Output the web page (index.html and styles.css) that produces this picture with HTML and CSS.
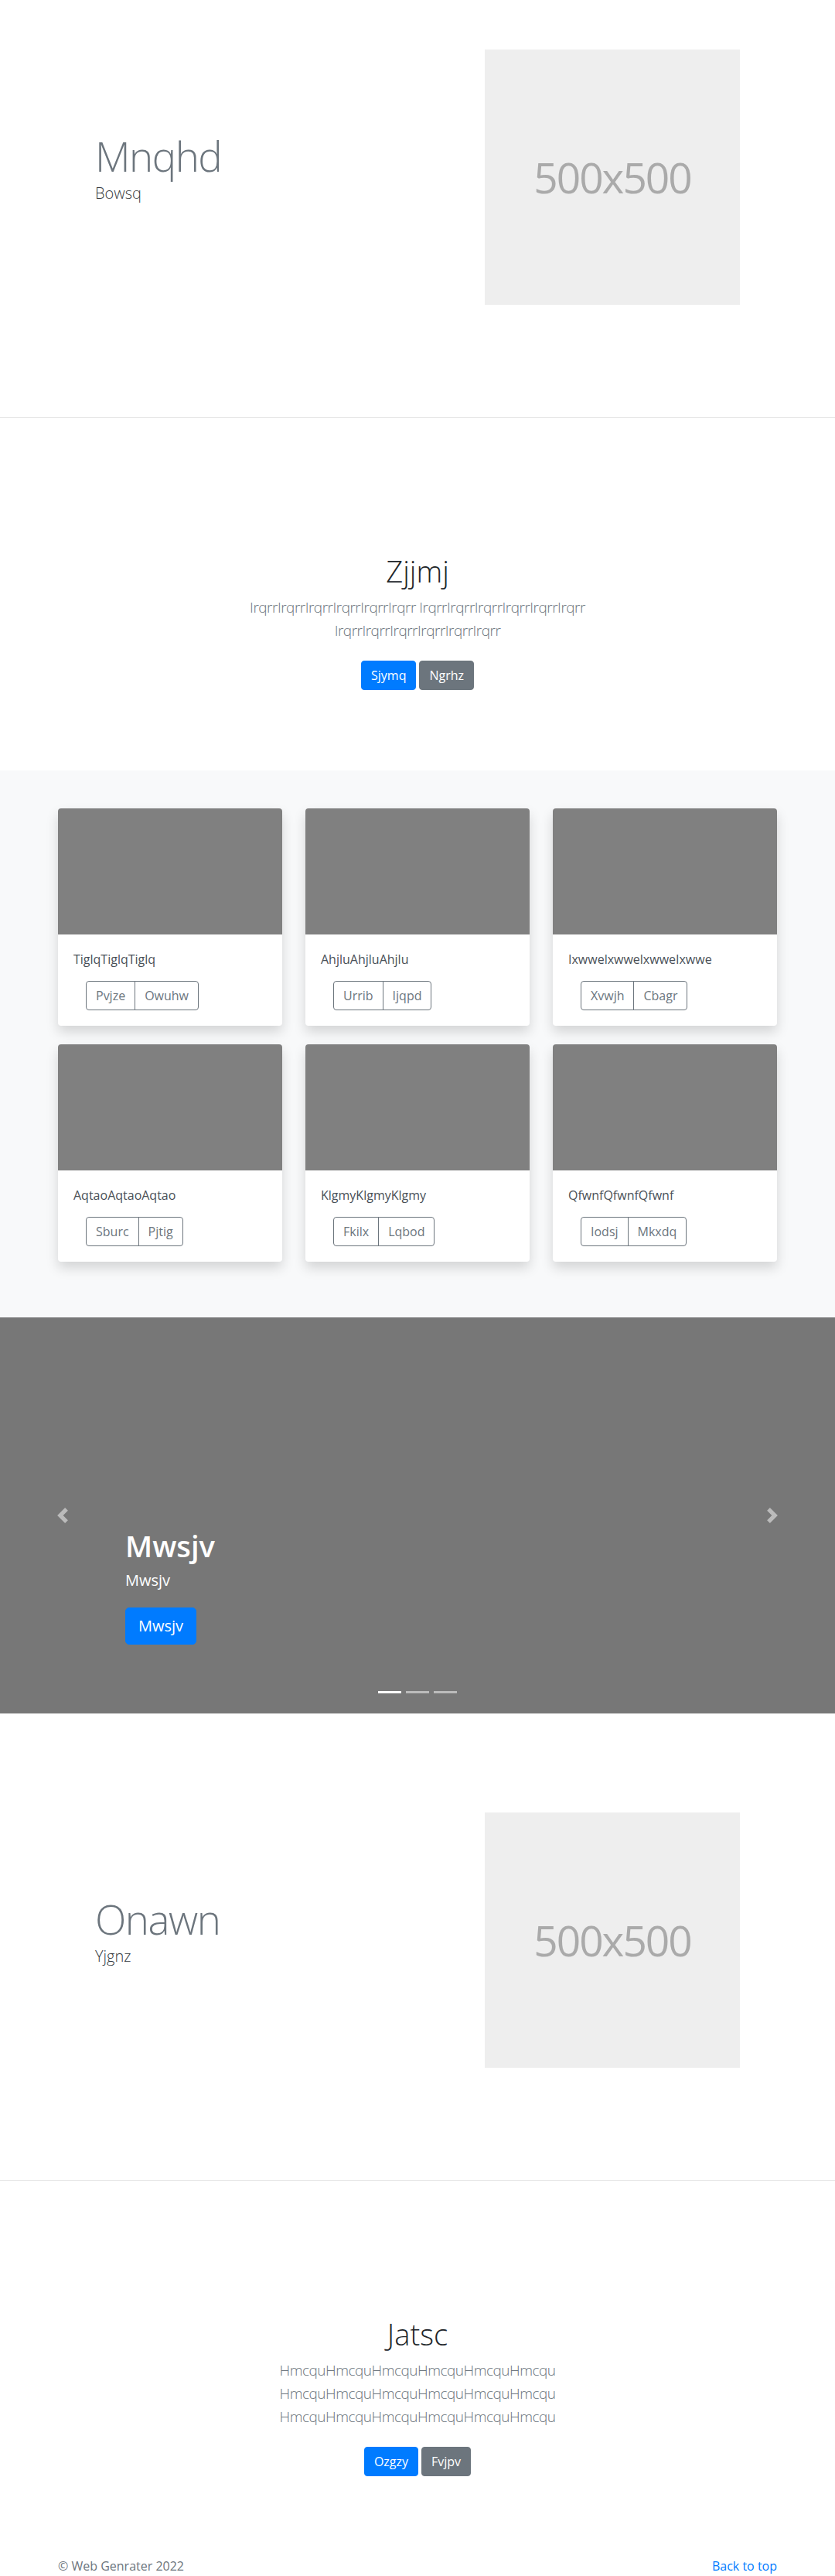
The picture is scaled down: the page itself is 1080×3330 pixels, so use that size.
FILE: index.html
```html
<!DOCTYPE html>
<html lang="en">
<head>
<meta charset="utf-8">
<title>Web Genrater</title>
<link rel="stylesheet" href="styles.css">
</head>
<body>

<section class="feature">
  <div class="container">
    <div class="feature-row">
      <div class="feature-text">
        <h2 class="feature-title">Mnqhd</h2>
        <p class="feature-lead">Bowsq</p>
      </div>
      <div class="placeholder"><span>500x500</span></div>
    </div>
  </div>
</section>

<section class="hero">
  <div class="container hero-inner">
    <h1 class="hero-title">Zjjmj</h1>
    <p class="hero-lead">IrqrrIrqrrIrqrrIrqrrIrqrrIrqrr IrqrrIrqrrIrqrrIrqrrIrqrrIrqrr IrqrrIrqrrIrqrrIrqrrIrqrrIrqrr</p>
    <div class="hero-actions">
      <a class="btn btn-primary" href="#">Sjymq</a>
      <a class="btn btn-secondary" href="#">Ngrhz</a>
    </div>
  </div>
</section>

<section class="album">
  <div class="container">
    <div class="card-grid">
      <div class="card">
        <div class="card-img"></div>
        <div class="card-body">
          <p class="card-text">TiglqTiglqTiglq</p>
          <div class="btn-group"><button class="btn btn-outline">Pvjze</button><button class="btn btn-outline">Owuhw</button></div>
        </div>
      </div>
      <div class="card">
        <div class="card-img"></div>
        <div class="card-body">
          <p class="card-text">AhjluAhjluAhjlu</p>
          <div class="btn-group"><button class="btn btn-outline">Urrib</button><button class="btn btn-outline">Ijqpd</button></div>
        </div>
      </div>
      <div class="card">
        <div class="card-img"></div>
        <div class="card-body">
          <p class="card-text">IxwwelxwwelxwweIxwwe</p>
          <div class="btn-group"><button class="btn btn-outline">Xvwjh</button><button class="btn btn-outline">Cbagr</button></div>
        </div>
      </div>
      <div class="card">
        <div class="card-img"></div>
        <div class="card-body">
          <p class="card-text">AqtaoAqtaoAqtao</p>
          <div class="btn-group"><button class="btn btn-outline">Sburc</button><button class="btn btn-outline">Pjtig</button></div>
        </div>
      </div>
      <div class="card">
        <div class="card-img"></div>
        <div class="card-body">
          <p class="card-text">KlgmyKlgmyKlgmy</p>
          <div class="btn-group"><button class="btn btn-outline">Fkilx</button><button class="btn btn-outline">Lqbod</button></div>
        </div>
      </div>
      <div class="card">
        <div class="card-img"></div>
        <div class="card-body">
          <p class="card-text">QfwnfQfwnfQfwnf</p>
          <div class="btn-group"><button class="btn btn-outline">Iodsj</button><button class="btn btn-outline">Mkxdq</button></div>
        </div>
      </div>
    </div>
  </div>
</section>

<section class="carousel">
  <div class="carousel-caption">
    <h1 class="caption-title">Mwsjv</h1>
    <p class="caption-text">Mwsjv</p>
    <p class="caption-cta"><a class="btn btn-lg btn-primary" href="#">Mwsjv</a></p>
  </div>
  <a class="carousel-control prev" href="#" aria-label="Previous">
    <svg width="20" height="20" viewBox="0 0 8 8"><path d="M5.25 0l-4 4 4 4 1.5-1.5L4.25 4l2.5-2.5L5.25 0z" fill="#fff"/></svg>
  </a>
  <a class="carousel-control next" href="#" aria-label="Next">
    <svg width="20" height="20" viewBox="0 0 8 8"><path d="M2.75 0l-1.5 1.5L3.75 4l-2.5 2.5L2.75 8l4-4-4-4z" fill="#fff"/></svg>
  </a>
  <ol class="carousel-indicators">
    <li class="active"></li>
    <li></li>
    <li></li>
  </ol>
</section>

<section class="feature">
  <div class="container">
    <div class="feature-row">
      <div class="feature-text">
        <h2 class="feature-title">Onawn</h2>
        <p class="feature-lead">Yjgnz</p>
      </div>
      <div class="placeholder"><span>500x500</span></div>
    </div>
  </div>
</section>

<section class="hero hero-last">
  <div class="container hero-inner">
    <h1 class="hero-title">Jatsc</h1>
    <p class="hero-lead">HmcquHmcquHmcquHmcquHmcquHmcqu HmcquHmcquHmcquHmcquHmcquHmcqu HmcquHmcquHmcquHmcquHmcquHmcqu</p>
    <div class="hero-actions">
      <a class="btn btn-primary" href="#">Ozgzy</a>
      <a class="btn btn-secondary" href="#">Fvjpv</a>
    </div>
  </div>
</section>

<footer class="footer">
  <div class="container footer-row">
    <p class="footer-copy">© Web Genrater 2022</p>
    <p class="footer-top"><a href="#">Back to top</a></p>
  </div>
</footer>

</body>
</html>
```

FILE: styles.css
```css
* {
  box-sizing: border-box;
}

body {
  margin: 0;
  font-family: "Open Sans", "Noto Sans", sans-serif;
  font-size: 16px;
  line-height: 1.5;
  color: #212529;
  background: #fff;
}

a {
  color: #007bff;
  text-decoration: none;
}

.container {
  max-width: 960px;
  margin: 0 auto;
  padding: 0 15px;
}

/* ---------- buttons ---------- */
.btn {
  display: inline-block;
  font-family: inherit;
  font-size: 16px;
  font-weight: 400;
  line-height: 24px;
  padding: 6px 12px;
  border: 1px solid transparent;
  border-radius: 4px;
  text-align: center;
  white-space: nowrap;
  cursor: pointer;
}

.btn-primary {
  color: #fff;
  background: #007bff;
  border-color: #007bff;
}

.btn-secondary {
  color: #fff;
  background: #6c757d;
  border-color: #6c757d;
}

.btn-outline {
  color: #6c757d;
  background: transparent;
  border-color: #6c757d;
}

.btn-lg {
  font-size: 20px;
  line-height: 30px;
  padding: 8px 16px;
  border-radius: 5px;
}

/* ---------- feature sections ---------- */
.feature {
  padding: 64px 0 145px;
  border-bottom: 1px solid rgba(0, 0, 0, 0.1);
}

.feature-row {
  display: flex;
  align-items: flex-start;
  padding: 0 48px;
}

.feature-text {
  flex: 1;
  padding-top: 108px;
}

.feature-title {
  margin: 0 0 3px;
  font-size: 52.8px;
  font-weight: 300;
  line-height: 60px;
  letter-spacing: -1.5px;
  color: #6c757d;
}

.feature-lead {
  margin: 0;
  font-size: 20px;
  font-weight: 300;
  line-height: 30px;
  color: #343a40;
}

.placeholder {
  width: 330px;
  height: 330px;
  flex: none;
  display: flex;
  align-items: center;
  justify-content: center;
  background: #eee;
  color: #aaa;
  font-size: 55px;
  letter-spacing: -2px;
}

/* ---------- hero sections ---------- */
.hero {
  padding: 176px 0 96px;
  text-align: center;
}

.hero-inner {
  max-width: 640px;
}

.hero-title {
  margin: 0 0 8px;
  font-size: 38.2px;
  font-weight: 300;
  line-height: 1.2;
  color: #212529;
}

.hero-lead {
  margin: 0 0 16px;
  font-size: 19px;
  font-weight: 300;
  line-height: 30px;
  letter-spacing: -0.5px;
  color: #6c757d;
}

.hero-actions {
  display: flex;
  justify-content: center;
  gap: 4px;
  padding: 8px 0;
}

/* ---------- album ---------- */
.album {
  background: #f8f9fa;
  padding: 49px 0 72px;
}

.card-grid {
  display: grid;
  grid-template-columns: repeat(3, 1fr);
  gap: 24px 30px;
}

.card {
  background: #fff;
  border-radius: 4px;
  overflow: hidden;
  box-shadow: 0 8px 16px rgba(0, 0, 0, 0.15);
}

.card-img {
  height: 163px;
  background: #808080;
}

.card-body {
  padding: 20px;
}

.card-text {
  margin: 0 0 16px;
  color: #495057;
}

.btn-group {
  display: inline-flex;
  margin-left: 16px;
}

.btn-group .btn:first-child {
  border-radius: 4px 0 0 4px;
}

.btn-group .btn + .btn {
  margin-left: -1px;
  border-radius: 0 4px 4px 0;
}

/* ---------- carousel ---------- */
.carousel {
  position: relative;
  height: 512px;
  margin-bottom: 64px;
  background: #777;
  color: #fff;
}

.carousel-caption {
  position: absolute;
  left: 15%;
  right: 15%;
  bottom: 48px;
  padding: 20px 0 41px;
  text-align: left;
}

.caption-title {
  margin: 0 0 6px;
  font-size: 38.2px;
  font-weight: 600;
  line-height: 1.2;
}

.caption-text {
  margin: 0 0 20px;
  font-size: 20px;
  line-height: 30px;
}

.caption-cta {
  margin: 0;
  display: flex;
}

.carousel-control {
  position: absolute;
  top: 0;
  bottom: 0;
  width: 15%;
  display: flex;
  align-items: center;
  justify-content: center;
  opacity: 0.5;
}

.carousel-control.prev {
  left: 0;
}

.carousel-control.next {
  right: 0;
}

.carousel-indicators {
  position: absolute;
  left: 0;
  right: 0;
  bottom: 16px;
  margin: 0;
  padding: 0;
  list-style: none;
  display: flex;
  justify-content: center;
}

.carousel-indicators li {
  width: 30px;
  height: 23px;
  margin: 0 3px;
  border-top: 10px solid transparent;
  border-bottom: 10px solid transparent;
  background: #fff;
  background-clip: padding-box;
  opacity: 0.5;
}

.carousel-indicators li.active {
  opacity: 1;
}

/* ---------- footer ---------- */
.footer {
  padding: 0 0 48px;
  color: #6c757d;
}

.footer-row {
  display: flex;
  justify-content: space-between;
}

.footer-row p {
  margin: 0;
}
```
